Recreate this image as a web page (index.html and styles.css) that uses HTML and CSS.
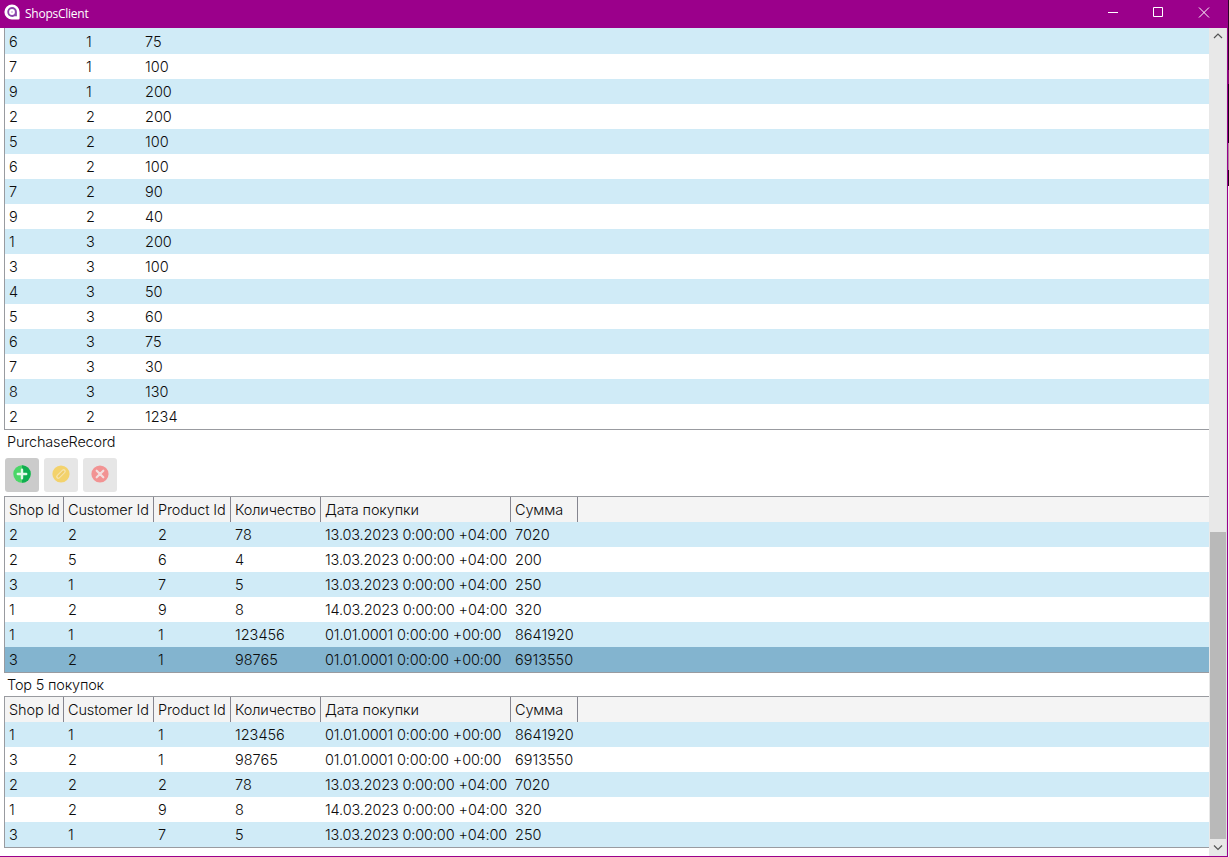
FILE: index.html
```html
<!DOCTYPE html>
<html lang="ru">
<head>
<meta charset="utf-8">
<title>ShopsClient</title>
<link rel="stylesheet" href="styles.css">
</head>
<body>
<div class="screen">
<div class="window">
<header class="titlebar">
<svg class="logo" width="16" height="16" viewBox="0 0 16 16"><path d="M8 .4a7.600 7.600 0 1 0 0 15.200h6.200a1.300 1.300 0 0 0 1.400-1.300V8A7.600 7.600 0 0 0 8 .4z" fill="#fff"/><path d="M8 3.100a4.900 4.900 0 1 0 2.500 9.200h2.400V8A4.900 4.900 0 0 0 8 3.100z" fill="#8b44ac"/><circle cx="8" cy="8" r="2.900" fill="#fff"/><circle cx="8" cy="8" r="1" fill="#d9bce5"/></svg>
<span class="title">ShopsClient</span>
<svg class="controls" width="138" height="28" viewBox="0 0 138 28" fill="none" stroke="#fff"><path d="M19 12.500h10M64.500 7.500h9v9h-9zM110 7.500l10 10M120 7.500l-10 10"/></svg>
</header>
<div class="client">
<main class="content">
<div class="table stock">
<div class="row tint"><span>6</span><span>1</span><span>75</span></div>
<div class="row"><span>7</span><span>1</span><span>100</span></div>
<div class="row tint"><span>9</span><span>1</span><span>200</span></div>
<div class="row"><span>2</span><span>2</span><span>200</span></div>
<div class="row tint"><span>5</span><span>2</span><span>100</span></div>
<div class="row"><span>6</span><span>2</span><span>100</span></div>
<div class="row tint"><span>7</span><span>2</span><span>90</span></div>
<div class="row"><span>9</span><span>2</span><span>40</span></div>
<div class="row tint"><span>1</span><span>3</span><span>200</span></div>
<div class="row"><span>3</span><span>3</span><span>100</span></div>
<div class="row tint"><span>4</span><span>3</span><span>50</span></div>
<div class="row"><span>5</span><span>3</span><span>60</span></div>
<div class="row tint"><span>6</span><span>3</span><span>75</span></div>
<div class="row"><span>7</span><span>3</span><span>30</span></div>
<div class="row tint"><span>8</span><span>3</span><span>130</span></div>
<div class="row"><span>2</span><span>2</span><span>1234</span></div>
</div>
<div class="label">PurchaseRecord</div>
<div class="toolbar">
<button class="tool active"><svg width="18" height="18" viewBox="0 0 18 18"><circle cx="9" cy="9" r="8.700" fill="#4bd768"/><path d="M9 .3a8.700 8.700 0 0 1 0 17.400z" fill="#10ad50"/><path d="M9 4.800v8.400M4.800 9h8.400" stroke="#e4f8e8" stroke-width="2.400" stroke-linecap="round"/></svg></button>
<button class="tool"><svg width="18" height="18" viewBox="0 0 18 18"><circle cx="9" cy="9" r="8.600" fill="#f3d26c"/><path d="M6.200 11.800l5.500-5.500" stroke="#f5e3ac" stroke-width="4.200" stroke-linecap="round"/><path d="M6.500 11.500l5-5" stroke="#efcb65" stroke-width="1.800" stroke-linecap="round"/></svg></button>
<button class="tool"><svg width="18" height="18" viewBox="0 0 18 18"><circle cx="9" cy="9" r="8.600" fill="#f29393"/><path d="M5.700 5.700l6.600 6.600M12.300 5.700l-6.600 6.600" stroke="#f3dede" stroke-width="2.200" stroke-linecap="round"/></svg></button>
</div>
<div class="table purchases">
<div class="row head"><span>Shop Id</span><span>Customer Id</span><span>Product Id</span><span>Количество</span><span>Дата покупки</span><span>Сумма</span></div>
<div class="row tint"><span>2</span><span>2</span><span>2</span><span>78</span><span>13.03.2023 0:00:00 +04:00</span><span>7020</span></div>
<div class="row"><span>2</span><span>5</span><span>6</span><span>4</span><span>13.03.2023 0:00:00 +04:00</span><span>200</span></div>
<div class="row tint"><span>3</span><span>1</span><span>7</span><span>5</span><span>13.03.2023 0:00:00 +04:00</span><span>250</span></div>
<div class="row"><span>1</span><span>2</span><span>9</span><span>8</span><span>14.03.2023 0:00:00 +04:00</span><span>320</span></div>
<div class="row tint"><span>1</span><span>1</span><span>1</span><span>123456</span><span>01.01.0001 0:00:00 +00:00</span><span>8641920</span></div>
<div class="row selected"><span>3</span><span>2</span><span>1</span><span>98765</span><span>01.01.0001 0:00:00 +00:00</span><span>6913550</span></div>
</div>
<div class="label top">Top 5 покупок</div>
<div class="table purchases">
<div class="row head"><span>Shop Id</span><span>Customer Id</span><span>Product Id</span><span>Количество</span><span>Дата покупки</span><span>Сумма</span></div>
<div class="row tint"><span>1</span><span>1</span><span>1</span><span>123456</span><span>01.01.0001 0:00:00 +00:00</span><span>8641920</span></div>
<div class="row"><span>3</span><span>2</span><span>1</span><span>98765</span><span>01.01.0001 0:00:00 +00:00</span><span>6913550</span></div>
<div class="row tint"><span>2</span><span>2</span><span>2</span><span>78</span><span>13.03.2023 0:00:00 +04:00</span><span>7020</span></div>
<div class="row"><span>1</span><span>2</span><span>9</span><span>8</span><span>14.03.2023 0:00:00 +04:00</span><span>320</span></div>
<div class="row tint"><span>3</span><span>1</span><span>7</span><span>5</span><span>13.03.2023 0:00:00 +04:00</span><span>250</span></div>
</div>
</main>
<aside class="scrollbar">
<svg width="17" height="17" viewBox="0 0 17 17" fill="none" stroke="#555" stroke-width="1.200"><path d="M5 10l4-4 4 4"/></svg>
<div class="track"></div>
<div class="thumb"></div>
<svg width="17" height="17" viewBox="0 0 17 17" fill="none" stroke="#555" stroke-width="1.200"><path d="M5 6.500l4 4 4-4"/></svg>
</aside>
</div>
</div>
<div class="desktop"></div>
</div>
</body>
</html>
```
FILE: styles.css
```css
* { box-sizing: border-box; }
body { margin: 0; font-family: Inter, "Open Sans", sans-serif; font-size: 14.5px; font-weight: 300; color: #0c0c0c; }
.screen { display: flex; width: 1229px; height: 857px; overflow: hidden; }
.window { display: flex; flex-direction: column; width: 1228px; border-right: 1px solid #9b008b; border-bottom: 1px solid #9b008b; background: #fff; }
.desktop { width: 1px; background: linear-gradient(#2b0529 0 70px, #77106d 70px 84px, #15051b 84px 143px, #a68aa3 143px 170px, #1c091c 170px 186px, #f3edf3 186px); }
.titlebar { display: flex; align-items: center; height: 28px; padding-left: 4px; background: #9b008b; color: #fff; flex: none; }
.logo { margin-top: -4px; }
.title { margin: -2px auto 0 5px; font: 12px "Open Sans", sans-serif; letter-spacing: -.25px; }
.client { display: flex; flex: 1; min-height: 0; }
.content { display: flex; flex-direction: column; flex: 1; padding-left: 4px; }
.table { border: 1px solid #999ba0; border-right: 0; }
.stock { border-top: 0; padding-top: 1px; background: linear-gradient(#d0ebf7 0 1px, transparent 1px); }
.row { display: grid; height: 25px; line-height: 25px; white-space: nowrap; }
.stock .row { grid-template-columns: 77px 59px 1fr; }
.purchases .row { grid-template-columns: 59px 90px 77px 90px 190px 67px; }
.row span { padding-left: 4px; }
.purchases .row span:nth-child(5), .purchases .head span { letter-spacing: -.14px; }
.tint { background: #d0ebf7; }
.selected { background: #83b4cf; }
.head { background: #f4f4f4; }
.head span { border-right: 1px solid #85858f; }
.label { height: 24px; line-height: 24px; padding-left: 3px; letter-spacing: -.19px; }
.label.top { height: 23px; }
.toolbar { display: flex; gap: 5px; height: 42px; padding: 3.5px 0 0 .5px; }
.tool { display: flex; align-items: center; justify-content: center; width: 34px; height: 34px; padding: 0 0 2px; border: 0; border-radius: 3px; background: #e6e6e6; }
.tool.active { background: #cbcbcb; }
.scrollbar { display: flex; flex-direction: column; width: 18px; background: #e8e8e8; border-right: 1px solid #e0e0e0; }
.scrollbar svg { flex: none; }
.track { height: 487px; }
.thumb { flex: 1; margin-left: 1px; background: #b9b9b9; }
```
